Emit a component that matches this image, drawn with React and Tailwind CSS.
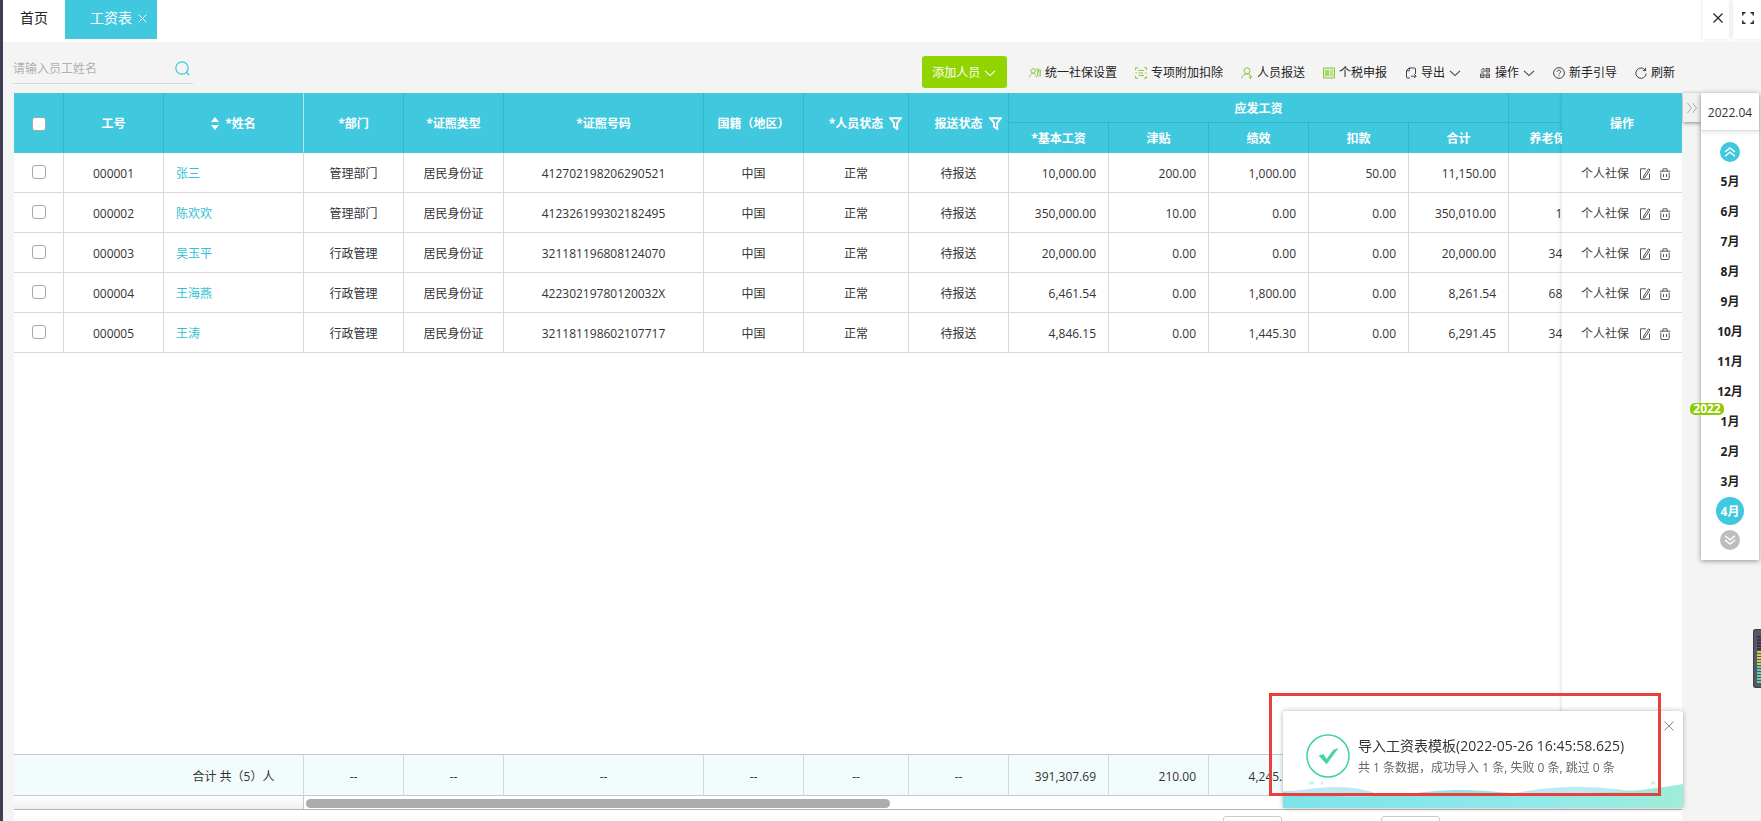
import React, { useState } from 'react';

const COLUMN_WIDTHS = ['w-[50px]', 'w-[100px]', 'w-[140px]', 'w-[100px]', 'w-[100px]', 'w-[200px]', 'w-[100px]', 'w-[105px]', 'w-[100px]', 'w-[100px]', 'w-[100px]', 'w-[100px]', 'w-[100px]', 'w-[100px]', 'w-[90px]'];

const employees = [
  { id: '000001', name: '张三', dept: '管理部门', card: '412702198206290521', money: ['10,000.00', '200.00', '1,000.00', '50.00', '11,150.00', '0.00'] },
  { id: '000002', name: '陈欢欢', dept: '管理部门', card: '412326199302182495', money: ['350,000.00', '10.00', '0.00', '0.00', '350,010.00', '10.00'] },
  { id: '000003', name: '吴玉平', dept: '行政管理', card: '321181196808124070', money: ['20,000.00', '0.00', '0.00', '0.00', '20,000.00', '344.00'] },
  { id: '000004', name: '王海燕', dept: '行政管理', card: '42230219780120032X', money: ['6,461.54', '0.00', '1,800.00', '0.00', '8,261.54', '688.00'] },
  { id: '000005', name: '王涛', dept: '行政管理', card: '321181198602107717', money: ['4,846.15', '0.00', '1,445.30', '0.00', '6,291.45', '344.00'] },
];

const totals = ['391,307.69', '210.00', '4,245.30', '50.00', '395,712.99', '1,386.00'];
const months = ['5月', '6月', '7月', '8月', '9月', '10月', '11月', '12月', '1月', '2月', '3月', '4月'];

const headCell = 'border-r border-b border-r-[#35b5ca] border-b-[#3fc8de] bg-[#3fc8de] px-0 pt-0.5 pb-0 font-bold text-white';
const bodyCell = 'border-r border-b border-[#dcd8d8] bg-white pt-[3px] pb-0 text-center';
const footCell = 'border-r border-r-[#d3dada] border-y border-y-[#c4c9c9] bg-[#f2fcfc] pt-[3px] pb-0 text-center';

function Svg({ children, size = 'h-3 w-3', box = '0 0 12 12', color = 'text-[#444]' }) {
  return (
    <svg className={`${size} ${color} shrink-0`} viewBox={box} fill="none" stroke="currentColor" aria-hidden="true">
      {children}
    </svg>
  );
}

const Chevron = ({ color }) => (
  <Svg size="h-3 w-3" color={color}><path d="M1 3.800 6 8.600l5-4.800" strokeWidth="1.100" /></Svg>
);

const Funnel = () => (
  <Svg size="h-[13px] w-[13px]" box="0 0 13 13" color="text-white">
    <path d="M1.200 1.200h10.600L8.200 6v5.800L5 9.800V6z" strokeWidth="2" />
  </Svg>
);

const DoubleChevron = ({ down }) => (
  <Svg size="h-3 w-3" color="text-white">
    {down
      ? <path d="m1 1.800 5 4 5-4M1 6l5 4 5-4" strokeWidth="1.400" />
      : <path d="M1 6l5-4 5 4M1 10.200l5-4 5 4" strokeWidth="1.400" />}
  </Svg>
);

const tools = [
  {
    text: '统一社保设置', color: 'text-[#8bc63f]',
    icon: <><circle cx="4" cy="4" r="2.200" /><path d="M.5 10.500C.8 8 2 6.500 4 6.500s3 1.200 3.500 4M6.500 2h2.300c1 0 1.500 1 1 2L9 5M8.500 3h3v6h-3zM9 5h2M9 7h2" strokeWidth=".8" /></>,
  },
  {
    text: '专项附加扣除', color: 'text-[#8bc63f]',
    icon: <path d="M.5 3V.8H3M9 .8h2.500V3M11.500 9v2.200H9M3 11.200H.5V9M3.500 3.500H9M3.500 6H8M3.500 8.500H9M.5 6h1.500M10 6h1.500" />,
  },
  {
    text: '人员报送', color: 'text-[#8bc63f]',
    icon: <><circle cx="6" cy="3.800" r="3" /><path d="M.8 11.500C1 8.800 3 6.900 6 6.900c1.500 0 2.500.4 3.300 1.100M7.500 10h4M9.500 8v4" /></>,
  },
  {
    text: '个税申报', color: 'text-[#8bc63f]',
    icon: <><path d="M.5 1h11v10H.5z" fill="#dff0c4" /><path d="M2 4h4M2 6h4M2 8h4M3 3v6M5 3v6M7 4h3.500M7 6h3M7 8h3.500" strokeWidth=".8" /></>,
  },
  {
    text: '导出', menu: true,
    icon: <path d="M5 11H2.500a1 1 0 0 1-1-1V3.500L4 1h5.500a1 1 0 0 1 1 1v5M4.300 1v2.800H1.500M6 9.200h5M9.200 7.200l2 2-2 2" />,
  },
  {
    text: '操作', menu: true,
    icon: <path d="M1.800 3.500 4 1.500h1V5H2M7 1.500h3.500V5H7zM7 7h3.500v3.500H7zM1.500 7H5v3.500H1.500zM1.500 8.800H5M7 8.800h3.500M7 3.200h3.500" strokeWidth=".9" />,
  },
  {
    text: '新手引导',
    icon: <><circle cx="6" cy="6" r="5.400" /><path d="M4.300 4.800c0-2.200 3.400-2.200 3.400 0C7.700 6 6 6 6 7.300M6 8.300v1" /></>,
  },
  {
    text: '刷新',
    icon: <path d="M10.300 3.200a5.200 5.200 0 1 0 .9 3.300M10.600.8v2.800H7.800" />,
  },
];

function TopBar() {
  return (
    <header className="flex h-[42px] shrink-0 items-start justify-between bg-white">
      <nav className="flex text-sm leading-5">
        <a href="#home" className="h-[39px] w-[62px] pt-2 pl-[17px] text-[#222]">首页</a>
        <div className="flex h-[39px] w-[92px] bg-[#3fc8de] pl-[25px] text-white">
          <a href="#salary" className="pt-2">工资表</a>
          <button aria-label="关闭工资表" className="mt-[14px] ml-1.5 h-[9px]">
            <Svg size="h-[9px] w-[9px]" box="0 0 9 9" color="text-white"><path d="m.7.700 7.600 7.600m0-7.600L.7 8.300" /></Svg>
          </button>
        </div>
      </nav>
      <div className="flex gap-1">
        <button aria-label="关闭" className="flex h-[39px] w-[26px] items-center justify-center pb-1 pl-1 shadow-[0_0_5px_rgba(0,0,0,0.12)]">
          <Svg size="h-2.5 w-2.5" box="0 0 10 10" color="text-[#222]"><path d="m.5.500 9 9m0-9-9 9" strokeWidth="1.200" /></Svg>
        </button>
        <button aria-label="全屏" className="flex h-[39px] w-7 items-center justify-center pb-1 pl-0.5 shadow-[0_0_5px_rgba(0,0,0,0.12)]">
          <Svg color="text-[#222]"><path d="M.8 3.500V.8h2.700M8.500.8h2.700v2.700M11.200 8.500v2.700H8.500M3.500 11.200H.8V8.500" strokeWidth="1.400" /></Svg>
        </button>
      </div>
    </header>
  );
}

function Toolbar() {
  return (
    <div className="flex h-[51px] shrink-0 items-start justify-between pr-[86px] pl-2.5">
      <form className="mt-3 flex h-[30px] w-[180px] items-center border-b border-[#d9d9d9]" onSubmit={(e) => e.preventDefault()}>
        <input
          type="text"
          aria-label="请输入员工姓名"
          placeholder="请输入员工姓名"
          className="min-w-0 flex-1 bg-transparent outline-none placeholder:text-[#b0b0b0]"
        />
        <button aria-label="搜索" className="mr-[3px]">
          <Svg size="h-[15px] w-[15px]" box="0 0 15 15" color="text-[#3fc8de]">
            <circle cx="7" cy="7" r="6.200" strokeWidth="1.200" /><path d="m11.300 11.300 3 3" strokeWidth="1.300" />
          </Svg>
        </button>
      </form>
      <div className="mt-3.5 flex h-8 items-center gap-[18px]">
        <button className="mr-1 flex h-8 w-[85px] items-center justify-center gap-1 rounded-[3px] bg-[#92d400] pt-px text-white">
          添加人员
          <Chevron color="text-white" />
        </button>
        {tools.map((t) => (
          <button key={t.text} className="flex items-center gap-1 pt-0.5 whitespace-nowrap text-[#222]">
            <Svg color={t.color}>{t.icon}</Svg>
            {t.text}
            {t.menu && <Chevron />}
          </button>
        ))}
      </div>
    </div>
  );
}

const Columns = () => (
  <colgroup>
    {COLUMN_WIDTHS.map((w, i) => <col key={i} className={w} />)}
  </colgroup>
);

const Tick = ({ label }) => (
  <input type="checkbox" aria-label={label} className="mx-auto block h-3.5 w-3.5 appearance-none rounded-[3px] border border-[#a8a8a8] bg-white checked:bg-[#3fc8de]" />
);

const FilterHead = ({ text }) => (
  <div className="grid grid-cols-[1fr_auto_1fr] items-center gap-1.5">
    <span />
    {text}
    <Funnel />
  </div>
);

function SalaryTable() {
  return (
    <table className="w-[1585px] shrink-0 table-fixed border-separate border-spacing-0">
      <Columns />
      <thead>
        <tr className="h-[30px]">
          <th rowSpan={2} className={headCell}><Tick label="全选" /></th>
          <th rowSpan={2} className={headCell}>工号</th>
          <th rowSpan={2} className={`${headCell} border-r-[#b5e6ee]`}>
            <div className="flex items-center justify-center gap-1.5">
              <svg className="h-[13px] w-2" viewBox="0 0 8 13" fill="#fff" aria-hidden="true"><path d="M4 0l4 5H0zM0 8h8l-4 5z" /></svg>
              *姓名
            </div>
          </th>
          <th rowSpan={2} className={headCell}>*部门</th>
          <th rowSpan={2} className={headCell}>*证照类型</th>
          <th rowSpan={2} className={headCell}>*证照号码</th>
          <th rowSpan={2} className={headCell}>国籍（地区）</th>
          <th rowSpan={2} className={headCell}><FilterHead text="*人员状态" /></th>
          <th rowSpan={2} className={headCell}><FilterHead text="报送状态" /></th>
          <th colSpan={5} className={`${headCell} border-b-[#35b5ca]`}>应发工资</th>
          <th className={`${headCell} border-b-[#35b5ca]`} />
        </tr>
        <tr className="h-[30px]">
          {['*基本工资', '津贴', '绩效', '扣款', '合计', '养老保险'].map((h) => <th key={h} className={headCell}>{h}</th>)}
        </tr>
      </thead>
      <tbody>
        {employees.map((e) => (
          <tr key={e.id} className="h-10">
            <td className="border-r border-b border-[#dcd8d8] bg-white px-0 pt-0 pb-0.5"><Tick label={e.name} /></td>
            <td className={bodyCell}>{e.id}</td>
            <td className="border-r border-b border-[#dcd8d8] bg-white pt-0.5 pb-0 pl-3 text-left"><a href={`#${e.id}`} className="text-[#33bfd4]">{e.name}</a></td>
            <td className={bodyCell}>{e.dept}</td>
            <td className={bodyCell}>居民身份证</td>
            <td className={bodyCell}>{e.card}</td>
            <td className={bodyCell}>中国</td>
            <td className={bodyCell}>正常</td>
            <td className={bodyCell}>待报送</td>
            {e.money.map((m, i) => <td key={i} className={`${bodyCell} pr-3 text-right`}>{m}</td>)}
          </tr>
        ))}
      </tbody>
    </table>
  );
}

function TotalsTable() {
  return (
    <table className="w-[1585px] shrink-0 table-fixed border-separate border-spacing-0">
      <Columns />
      <tbody>
        <tr className="h-[42px]">
          <td colSpan={2} className={`${footCell} border-r-0`} />
          <td className={`${footCell} border-r-[#c4c9c9]`}>合计 共（5）人</td>
          {[0, 1, 2, 3, 4, 5].map((i) => <td key={i} className={footCell}>--</td>)}
          {totals.map((t, i) => <td key={i} className={`${footCell} pr-3 text-right`}>{t}</td>)}
        </tr>
      </tbody>
    </table>
  );
}

function ActionsTable() {
  return (
    <table className="w-full table-fixed border-separate border-spacing-0">
      <thead>
        <tr className="h-[60px]"><th className="bg-[#3fc8de] px-0 pt-0.5 pb-0 font-bold text-white">操作</th></tr>
      </thead>
      <tbody>
        {employees.map((e) => (
          <tr key={e.id} className="h-10">
            <td className="border-b border-[#dcd8d8] bg-white px-0 pt-0.5 pb-0">
              <div className="flex items-center gap-2 pl-[19px] text-[#444]">
                <a href={`#social-${e.id}`} className="mr-0.5">个人社保</a>
                <button aria-label="编辑">
                  <Svg color="text-[#555]"><path d="M7 .8H1.500v10.400h9V5.500M9.600.8l1.300 1-4.700 7.200-1.700 1 .3-2z" /></Svg>
                </button>
                <button aria-label="删除">
                  <Svg color="text-[#555]"><path d="M.8 3.200h10.400M3.500 3.200l.5-2.400h4l.5 2.400M1.800 4.500v5.700q0 1.300 1.300 1.300h5.800q1.300 0 1.300-1.300V4.500M4.500 6v3M7.500 6v3" /></Svg>
                </button>
              </div>
            </td>
          </tr>
        ))}
      </tbody>
    </table>
  );
}

function MonthPicker() {
  const [active, setActive] = useState('4月');
  return (
    <aside className="flex w-[79px] shrink-0 items-start">
      <button aria-label="收起" className="ml-px flex h-[29px] w-[18px] items-center justify-center bg-[#f1f1f1] shadow-[0_1px_4px_rgba(0,0,0,0.45)]">
        <Svg color="text-[#aaa]"><path d="m1.500 1 4 5-4 5m5-10 4 5-4 5" /></Svg>
      </button>
      <div className="relative z-10 flex w-[58px] flex-col items-center bg-white pb-2.5 shadow-[0_1px_5px_rgba(0,0,0,0.4)]">
        <button className="h-[38px] w-full border-b border-[#ddd] pt-0.5 text-center text-[#333] shadow-[0_2px_4px_rgba(0,0,0,0.08)]">2022.04</button>
        <button aria-label="上一组" className="mt-[11px] mb-1 flex h-5 w-5 items-center justify-center rounded-full bg-[#3fc8de]"><DoubleChevron /></button>
        <ul className="font-bold text-[#222]">
          {months.map((m) => (
            <li key={m} className="flex h-[30px] items-center justify-center">
              <button
                onClick={() => setActive(m)}
                className={`h-7 w-7 rounded-full pt-0.5 whitespace-nowrap ${m === active ? 'bg-[#3fc8de] text-white' : ''}`}
              >
                {m}
              </button>
            </li>
          ))}
        </ul>
        <button aria-label="下一组" className="mt-1 flex h-5 w-5 items-center justify-center rounded-full bg-[#bdbdbd]"><DoubleChevron down /></button>
        <span className="absolute top-[310px] -left-[11px] flex h-3 w-[34px] items-center justify-center rounded-[5px] bg-[#92c80a] font-bold text-white">2022</span>
      </div>
    </aside>
  );
}

function ImportToast() {
  return (
    <section role="status" className="fixed right-[78px] bottom-[13px] z-20 h-[97px] w-[400px] rounded-[3px] bg-white shadow-[0_0_5px_rgba(0,0,0,0.3)]">
      <svg className="absolute bottom-0 left-0 h-[30px] w-full" viewBox="0 0 400 30" preserveAspectRatio="none" aria-hidden="true">
        <defs>
          <linearGradient id="sea" x1="0" x2="1">
            <stop offset="0" stopColor="#7de3e9" />
            <stop offset=".65" stopColor="#91e9e9" />
            <stop offset="1" stopColor="#9fedda" />
          </linearGradient>
        </defs>
        <path d="M0 13c20 0 32-4 52-4s34 3 48 9H0zM220 17c26-4 42-8 72-8s38 2 68 5v8H220z" fill="#b9ebf6" />
        <path d="M0 14c32 3 56 5 92 4s52-6 86-6 50 5 86 4c56-1 90-2 136-10v24H0z" fill="url(#sea)" />
        <path d="M26 5h5M38 5h2M368 5h4" stroke="#c8f2e6" strokeWidth="3" />
      </svg>
      <div className="relative flex items-center gap-2 pt-[23px] pl-[23px]">
        <Svg size="h-11 w-11" box="0 0 44 44" color="text-[#41d3a2]">
          <circle cx="22" cy="22" r="21" strokeWidth="1.500" />
          <path d="m13 21.500 4.500-1 3 5 7-9.500 4.500-1.500L20.500 30z" fill="currentColor" strokeWidth=".5" />
        </Svg>
        <div className="whitespace-nowrap">
          <p className="text-sm leading-6 text-[#333]">导入工资表模板(2022-05-26 16:45:58.625)</p>
          <p className="leading-5 text-[#666]">共 1 条数据，成功导入 1 条, 失败 0 条, 跳过 0 条</p>
        </div>
      </div>
      <button aria-label="关闭提示" className="absolute top-[10px] right-[9px]">
        <Svg size="h-2.5 w-2.5" box="0 0 10 10" color="text-[#888]"><path d="m.5.500 9 9m0-9-9 9" /></Svg>
      </button>
      <div className="pointer-events-none absolute -top-[18px] -left-[14px] h-[103px] w-[392px] border-3 border-[#e8403d]" />
    </section>
  );
}

function Meter() {
  return (
    <div className="fixed top-[629px] right-0 flex h-[59px] w-2 flex-col gap-px rounded-l-[3px] border border-r-0 border-[#3b3d48] bg-[#555866] pt-1.5 pl-[3px]">
      {Array.from({ length: 16 }, (_, i) => (
        <span key={i} className={`h-[2px] shrink-0 ${i < 5 ? 'bg-[#343743]' : i < 10 ? 'bg-[#c8d24a]' : 'bg-[#5fd0a0]'}`} />
      ))}
    </div>
  );
}

export default function App() {
  return (
    <div className="flex h-screen flex-col overflow-hidden border-l-3 border-[#403d54] bg-[#f4f4f5] font-['Open_Sans','Noto_Sans_CJK_SC',sans-serif] text-xs text-[#333]">
      <TopBar />
      <Toolbar />
      <div className="flex min-h-0 flex-1 pl-[11px]">
        <main className="flex min-w-0 flex-1 flex-col bg-white">
          <div className="flex min-h-0 flex-1 border-b border-[#b5b5b5]">
            <div className="flex min-w-0 flex-1 flex-col overflow-hidden">
              <SalaryTable />
              <div className="flex-1" />
              <TotalsTable />
              <div className="flex h-[13px] shrink-0">
                <div className="w-[290px] shrink-0 border-r border-[#c4c9c9] bg-linear-to-b from-white to-[#efefef]" />
                <div className="flex-1 pt-[3px] pl-0.5">
                  <div className="h-[9px] w-[584px] rounded-full bg-[#adabac]" />
                </div>
              </div>
            </div>
            <div className="z-10 w-[120px] shrink-0 bg-white shadow-[0_0_5px_rgba(0,0,0,0.18)] [clip-path:inset(0_0_0_-6px)]">
              <ActionsTable />
            </div>
          </div>
          <div className="flex h-[11px] shrink-0 items-start justify-end gap-[99px] overflow-hidden pt-1.5 pr-[242px]">
            <select aria-label="每页条数" className="h-7 w-[59px] shrink-0 appearance-none rounded-[3px] border border-[#ccc] bg-white" />
            <select aria-label="页码" className="h-7 w-[59px] shrink-0 appearance-none rounded-[3px] border border-[#ccc] bg-white" />
          </div>
        </main>
        <MonthPicker />
      </div>
      <ImportToast />
      <Meter />
    </div>
  );
}
